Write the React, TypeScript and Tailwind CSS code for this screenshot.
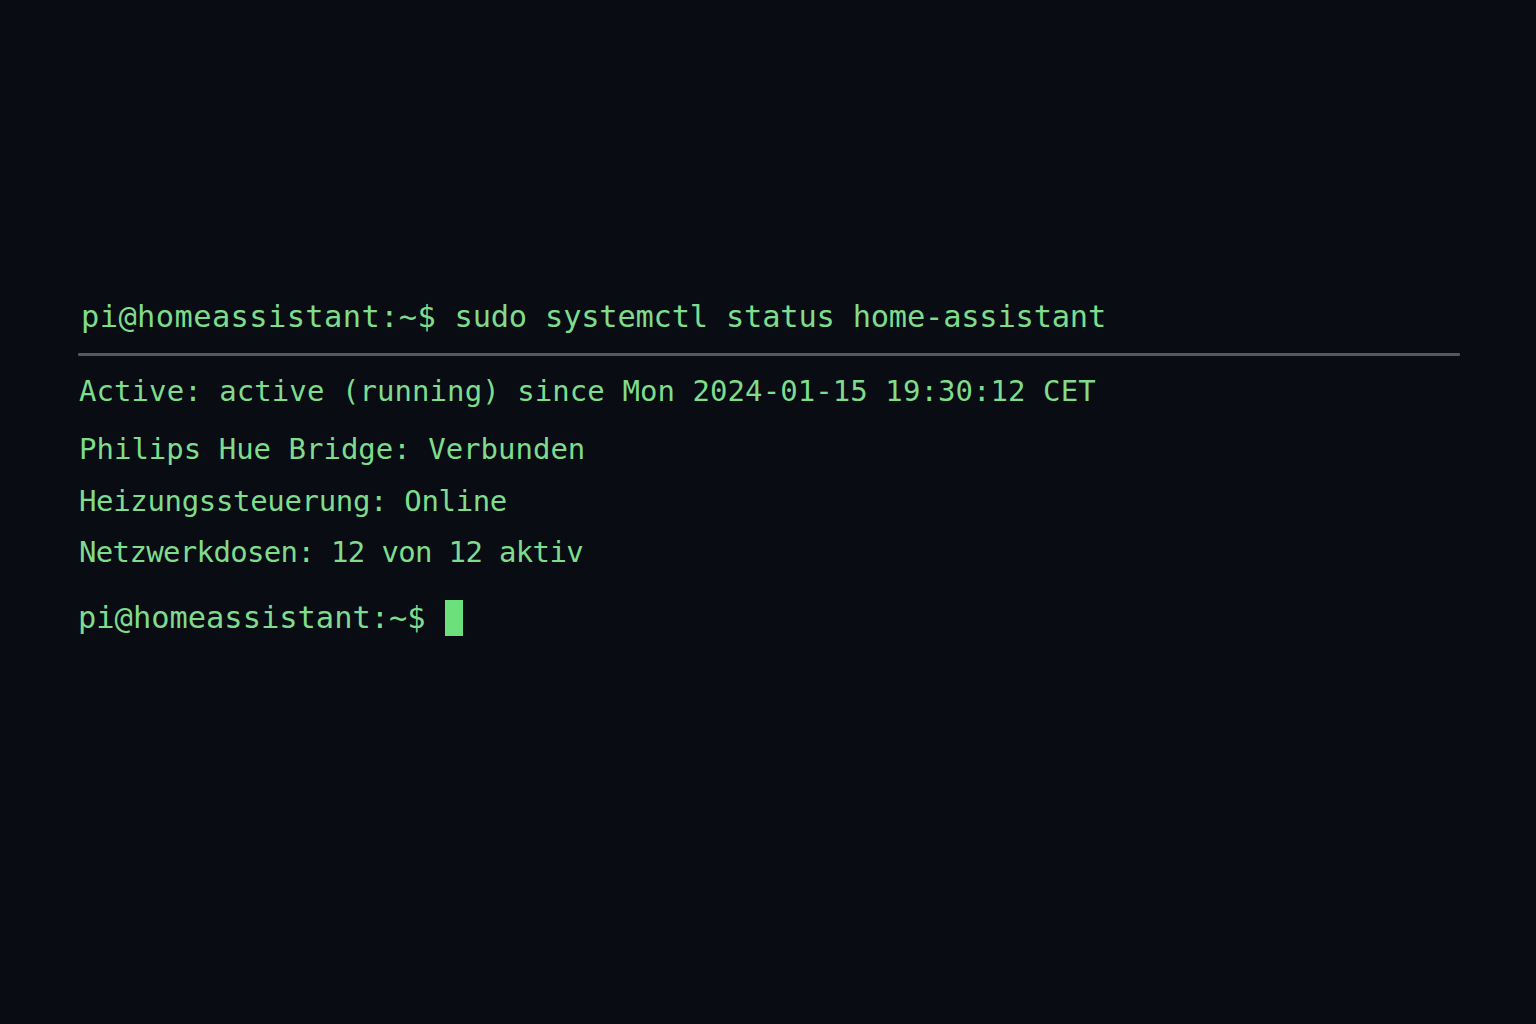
export default function App() {
  const mono = { fontFamily: '"DejaVu Sans Mono", "Liberation Mono", monospace' };
  return (
    <div className="w-full min-h-[1024px] bg-[#090c13] text-[#7fdc8c]" style={mono}>
      <div className="flex flex-col pt-[297px] pl-[78px]">
        <div className="pl-[3px] h-[40px] leading-[40px] text-[30.4px] whitespace-pre">
          <span className="tracking-[0.4px]">pi@homeassistant:~$</span>
          <span> </span>
          <span className="tracking-[-0.2px]">sudo systemctl status home-assistant</span>
        </div>
        <div className="mt-[16px] h-[3px] w-[1382px] bg-[#55585f] rounded-[1px]" />
        <div className="mt-[15px] pl-[1px] h-[40px] leading-[40px] text-[29px] tracking-[0.07px] whitespace-pre">
          Active: active (running) since Mon 2024-01-15 19:30:12 CET
        </div>
        <div className="mt-[18px] pl-[1px] h-[40px] leading-[40px] text-[29px] whitespace-pre">
          Philips Hue Bridge: Verbunden
        </div>
        <div className="mt-[12px] pl-[1px] h-[40px] leading-[40px] text-[29px] tracking-[-0.34px] whitespace-pre">
          Heizungssteuerung: Online
        </div>
        <div className="mt-[11px] pl-[1px] h-[40px] leading-[40px] text-[29px] tracking-[-0.66px] whitespace-pre">
          Netzwerkdosen: 12 von 12 aktiv
        </div>
        <div className="mt-[26px] flex items-center h-[40px]">
          <span className="leading-[40px] text-[30.4px] whitespace-pre">pi@homeassistant:~$ </span>
          <span className="ml-[1px] inline-block w-[18px] h-[36px] bg-[#6be07b]" />
        </div>
      </div>
    </div>
  );
}
